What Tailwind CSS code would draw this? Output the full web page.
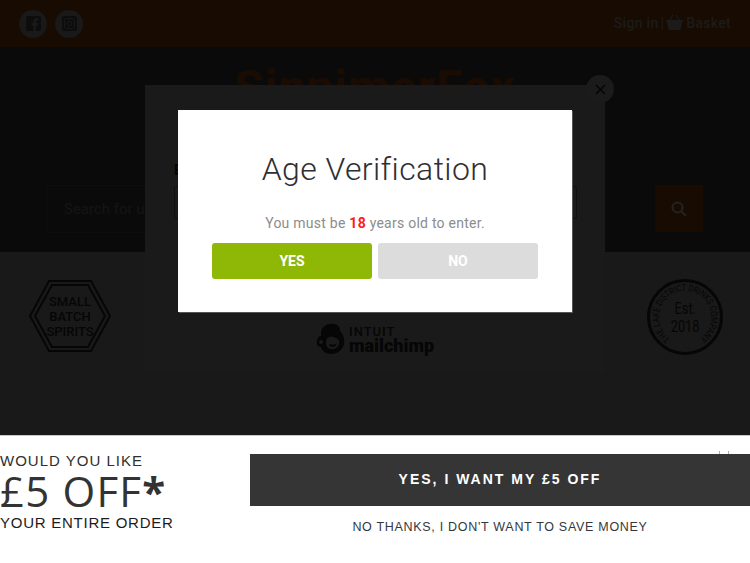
<!DOCTYPE html>
<html lang="en">
<head>
    <meta charset="UTF-8">
    <meta name="viewport" content="width=device-width, initial-scale=1.0">
    <title>Age Verification</title>
    <script src="https://cdn.jsdelivr.net/npm/@tailwindcss/browser@4"></script>
</head>
<body class="relative w-[750px] h-[563px] overflow-hidden bg-white font-['Roboto',sans-serif]">
    <!-- Top bar -->
    <div class="h-[47px] bg-[#170b02] flex items-center justify-between pl-[19px] pr-[19px]">
        <div class="flex gap-[8px]">
            <div class="w-[28px] h-[28px] rounded-full bg-[#191919] flex items-center justify-center">
                <svg width="15" height="15" viewBox="0 0 15 15"><path fill="#0d0d0d" d="M2 0h11a2 2 0 0 1 2 2v11a2 2 0 0 1-2 2h-3V9.500h2l.4-2.500H10V5.600c0-.8.3-1.200 1.200-1.200h1.300V2.200H10.600C8.500 2.200 7.400 3.500 7.400 5.400V7H5.500v2.500h1.900V15H2a2 2 0 0 1-2-2V2a2 2 0 0 1 2-2z"/></svg>
            </div>
            <div class="w-[28px] h-[28px] rounded-full bg-[#191919] flex items-center justify-center">
                <svg width="15" height="15" viewBox="0 0 15 15"><rect width="15" height="15" rx="2" fill="#0d0d0d"/><rect x="2.500" y="2.500" width="10" height="10" rx="2.500" fill="none" stroke="#191919"/><circle cx="7.500" cy="7.500" r="2.300" fill="none" stroke="#191919"/></svg>
            </div>
        </div>
        <div class="flex items-center text-[14px] font-medium tracking-[0.3px] text-[#1b1b1b]">
            <span>Sign in</span>
            <span class="ml-[2px] mr-[2px]">|</span>
            <svg width="17" height="16" viewBox="0 0 17 16" class="mr-[3px] mt-[-3px]"><path fill="#1b1b1b" d="M0 6h17v1.500h-.8L14.800 15a1 1 0 0 1-1 1H3.200a1 1 0 0 1-1-1L.8 7.500H0z"/><path fill="none" stroke="#1b1b1b" stroke-width="1.200" d="M3.500 6.500L7 .8M13.500 6.500L10 .8"/></svg>
            <span>Basket</span>
        </div>
    </div>

    <!-- Header with logo and search -->
    <div class="h-[205px] bg-[#0a0a0a] relative">
        <div class="text-center pt-[12px] text-[48px] leading-[58px] font-bold text-[#1a0c02] tracking-[1px]">SinnimerFox</div>
        <div class="absolute left-[46px] top-[138px] w-[530px] h-[48px] border border-[#0e0e0e] flex items-center pl-[17px] text-[15px] text-[#151515]">Search for unique spirits</div>
        <div class="absolute left-[655px] top-[138px] w-[48px] h-[47px] bg-[#170b02] flex items-center justify-center">
            <svg width="16" height="16" viewBox="0 0 16 16" fill="none" stroke="#232323" stroke-width="2.200"><circle cx="6.500" cy="6.500" r="5"/><path d="M10.200 10.200L15 15"/></svg>
        </div>
    </div>

    <!-- Badges row -->
    <div class="h-[183px] bg-[#191919] flex items-start justify-between pl-[28px] pr-[27px] pt-[27px]">
        <div class="relative w-[84px] h-[74px] flex items-center justify-center">
            <svg width="84" height="74" viewBox="0 0 84 74" class="absolute inset-0" fill="none" stroke="#060606" stroke-width="2"><path d="M21 2h42l19 35-19 35H21L2 37z"/><path d="M24 6h36l17 31-17 31H24L7 37z"/></svg>
            <div class="relative text-center text-[13px] font-medium leading-[15px] text-[#060606]">SMALL<br>BATCH<br>SPIRITS</div>
        </div>
        <div class="relative w-[76px] h-[76px] rounded-full border-[3px] border-[#060606] flex flex-col items-center justify-center text-[#060606] text-[17px] leading-[18px]">
            <svg width="70" height="70" viewBox="0 0 70 70" class="absolute inset-0">
                <defs><path id="ring" d="M20.100 56.300A26 26 0 1 1 49.900 56.300"/></defs>
                <text font-size="9.500" fill="#060606" font-family="Roboto, sans-serif"><textPath href="#ring" textLength="131" lengthAdjust="spacingAndGlyphs">THE LAKE DISTRICT DRINKS COMPANY</textPath></text>
            </svg>
            <span class="scale-x-[0.75]">Est.</span>
            <span class="scale-x-[0.75]">2018</span>
        </div>
    </div>

    <!-- Newsletter panel behind the modal -->
    <div class="absolute left-[145px] top-[85px] w-[460px] h-[288px] bg-[#1a1a1a] flex items-end justify-center pb-[18px]">
        <div class="absolute left-[29px] top-[77px] text-[14px] leading-[16px] font-bold text-[#060606]">Email</div>
        <div class="absolute left-[29px] top-[101px] w-[403px] h-[33px] rounded-[2px] border border-[#101010]"></div>
        <div class="flex items-center gap-[3px] text-[#060606] ml-[-1px]">
            <svg width="31" height="32" viewBox="0 0 31 32"><path fill="#060606" d="M6 9C7 3 13 0 19 1c5 1 6 4 6 7 3 3 5 8 4 13-1 6-7 10-13 10-5 0-9-3-10-7-3 0-5-3-4-6 0-3 2-5 4-5z"/><path fill="#1a1a1a" d="M12 15c3-2 6-2 8 0 3 0 5 3 4 6-1 4-5 6-8 5-3 0-5-3-5-6z"/><path fill="#060606" d="M14 21c3 1 6 1 8-1-1 3-3 4-5 4-1 0-3-1-3-3z"/><circle cx="6" cy="19" r="2" fill="#1a1a1a"/></svg>
            <div class="flex flex-col">
                <span class="text-[13px] leading-[12px] font-medium tracking-[1px]">INTUIT</span>
                <span class="text-[18px] leading-[15px] font-black">mailchimp</span>
            </div>
        </div>
    </div>

    <!-- Age verification modal -->
    <div class="absolute left-[178px] top-[110px] w-[394px] h-[202px] bg-white shadow-[1px_1px_0_#555555] flex flex-col items-center">
        <h1 class="mt-[39px] text-[32px] leading-[40px] font-[350] tracking-[0.4px] text-[#2f2f33]">Age Verification</h1>
        <p class="mt-[24px] text-[14px] leading-[20px] tracking-[0.25px] text-[#8c8c8c]">You must be <b class="text-[#ff1a1a] font-bold">18</b> years old to enter.</p>
        <div class="mt-[10px] flex gap-[6px]">
            <button class="w-[160px] h-[36px] rounded-[3px] bg-[#8fb806] text-white text-[14px] font-bold">YES</button>
            <button class="w-[160px] h-[36px] rounded-[3px] bg-[#dcdcdc] text-white text-[14px] font-bold">NO</button>
        </div>
    </div>

    <!-- Close button -->
    <div class="absolute left-[586px] top-[75px] w-[28px] h-[28px] rounded-full bg-[#1b1b1b] flex items-center justify-center">
        <svg width="11" height="11" viewBox="0 0 11 11" stroke="#060606" stroke-width="1.600"><path d="M1 1l9 9M10 1l-9 9"/></svg>
    </div>

    <!-- Bottom offer bar -->
    <div class="h-[128px] bg-white border-t border-[#c8c8c8] flex items-start font-['Liberation_Sans',sans-serif]">
        <div class="w-[250px] pt-[16px] text-[#2f2f2f]">
            <div class="text-[15px] leading-[17px] tracking-[1px]">WOULD YOU LIKE</div>
            <div class="text-[42px] leading-[44px] font-medium font-['Open_Sans'] tracking-[1.200px] text-[#333333]">£5 OFF<span class="font-bold">*</span></div>
            <div class="text-[15px] leading-[17px] tracking-[0.75px] text-[#1c1c1c] mt-[1px]">YOUR ENTIRE ORDER</div>
        </div>
        <div class="w-[500px] pt-[18px] relative">
            <!-- corner of the close icon, peeking out above the button -->
            <div class="absolute left-[469px] top-[15px] w-[10px] h-[3px] border-x border-[#aaaaaa]"></div>
            <div class="h-[52px] bg-[#353535] flex items-center justify-center pb-[1px] text-white text-[14px] font-bold tracking-[2px]">YES, I WANT MY £5 OFF</div>
            <div class="mt-[12px] text-center text-[12.500px] leading-[18px] tracking-[0.7px] text-[#33373d]">NO THANKS, I DON'T WANT TO SAVE MONEY</div>
        </div>
    </div>
</body>
</html>
